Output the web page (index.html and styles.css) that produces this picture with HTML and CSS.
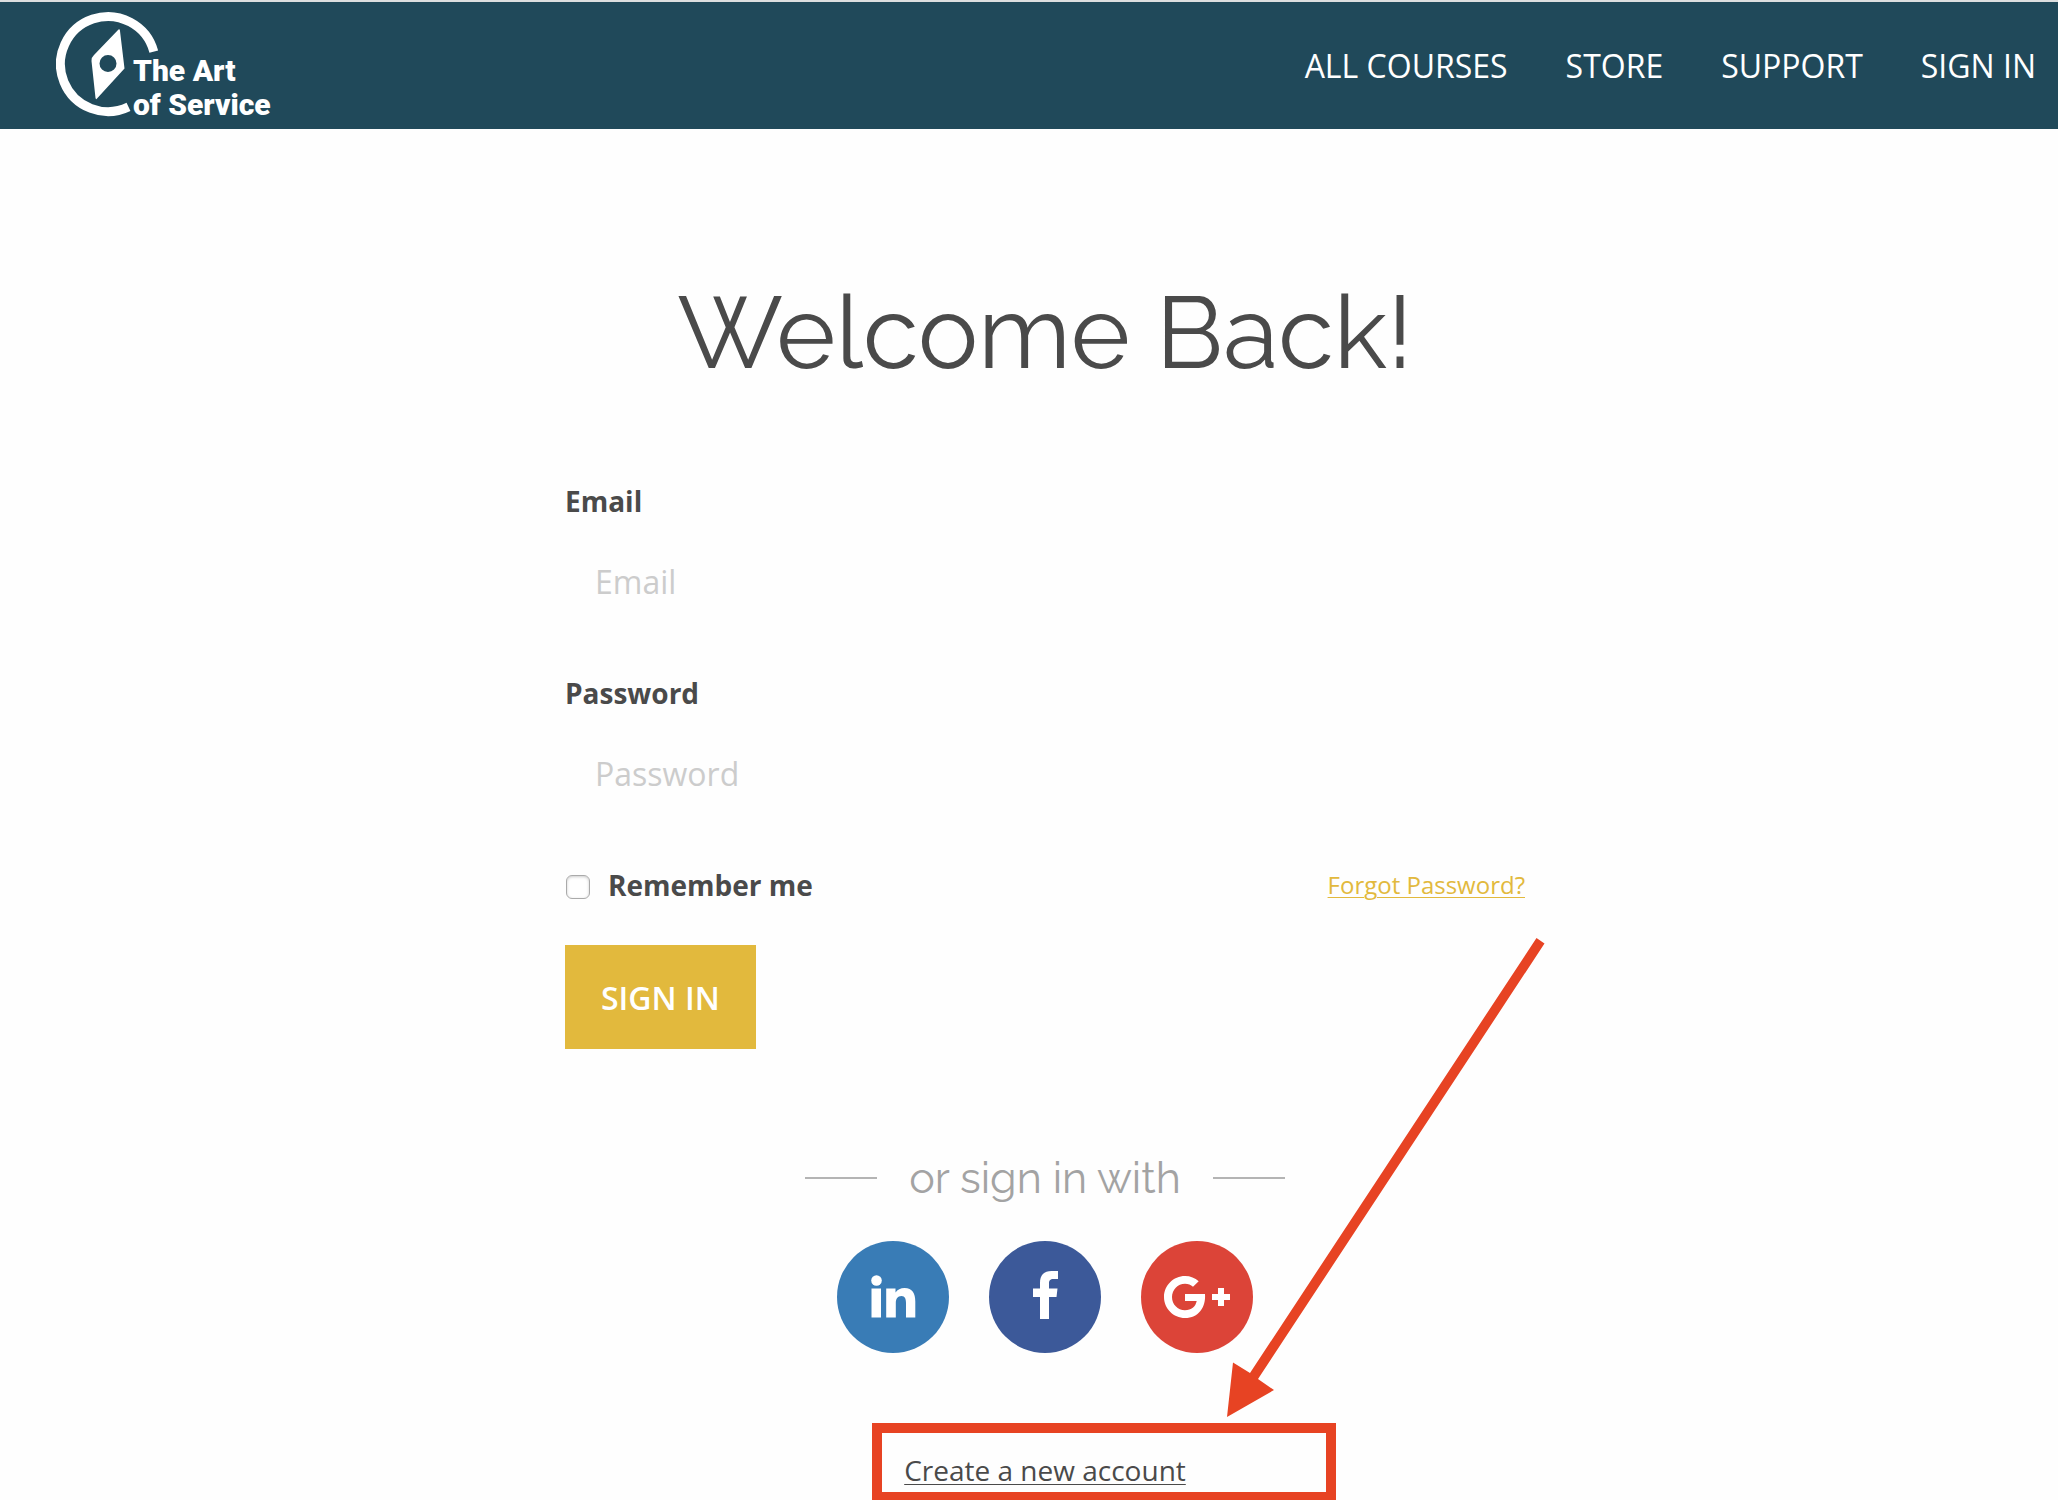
FILE: index.html
```html
<!DOCTYPE html>
<html lang="en">
<head>
  <meta charset="UTF-8" />
  <meta name="viewport" content="width=device-width, initial-scale=1" />
  <title>Sign In | The Art of Service</title>

  <link rel="stylesheet" href="styles.css">
</head>
<body>
  <header class="header">
    <a class="logo" href="#" aria-label="The Art of Service">
      <svg width="230" height="120" viewBox="0 -4 230 120">
        <path class="logo-ring" d="M97.8 41.6 A47.5 47.5 0 1 0 72.5 96.9" />
        <path class="logo-needle" fill-rule="evenodd" d="M62.5 19.5 Q64 18.500 64 21 L68.500 58.500 L41 88.500 Q40 90 39.500 88 L35.500 51 Q35.500 47 38 45 Z M60.500 53.500 a8.500 8.500 0 1 0 -17 0 a8.500 8.500 0 1 0 17 0 Z" />
        <text x="77" y="71">The Art</text>
        <text x="77" y="105">of Service</text>
      </svg>
    </a>
    <nav class="nav">
      <a href="#">ALL COURSES</a>
      <a href="#">STORE</a>
      <a href="#">SUPPORT</a>
      <a href="#">SIGN IN</a>
    </nav>
  </header>

  <main class="page">
    <div class="login">
      <h1>Welcome Back!</h1>

      <form class="login-form">
        <label for="email">Email</label>
        <input type="email" id="email" placeholder="Email" />

        <label for="password">Password</label>
        <input type="password" id="password" placeholder="Password" />

        <div class="options">
          <input type="checkbox" id="remember" />
          <label for="remember">Remember me</label>
          <a class="forgot" href="#">Forgot Password?</a>
        </div>

        <button type="submit" class="btn-signin">SIGN IN</button>
      </form>

      <div class="divider">or sign in with</div>

      <div class="social">
        <a class="linkedin" href="#" aria-label="LinkedIn">
          <svg viewBox="0 0 112 112">
            <circle cx="39.500" cy="39.500" r="5.300" />
            <path d="M34.500 47.500 H44 V76.500 H34.500 Z M49.200 47.500 H58.500 V51.500 C60.500 48.500 63.500 47 67.500 47 C75.500 47 78.300 52.500 78.300 60.500 V76.500 H69 V62 C69 58 68 55 64.500 55 C60.500 55 58.800 58 58.800 62 V76.500 H49.200 Z" />
          </svg>
        </a>
        <a class="facebook" href="#" aria-label="Facebook">
          <svg viewBox="0 0 112 112">
            <path d="M51 78 V56 H44 V47.500 H51 V42 C51 34 55 30 62.500 30 H69 V38 H64.500 C61 38 60 39.500 60 42.500 V47.500 H68.500 L67.500 56 H60 V78 Z" />
          </svg>
        </a>
        <a class="google" href="#" aria-label="Google Plus">
          <svg viewBox="0 0 112 112">
            <path d="M44 35 C49.500 35 54 37 57.700 40.300 L52 45.700 C49.800 43.800 47.300 42.700 44 42.700 C36.700 42.700 31 48.700 31 56 C31 63.300 36.700 69.200 44 69.200 C50.500 69.200 54.500 65.800 55.700 60 H44 V53 H64 C65 66.500 57.500 77 44 77 C32.400 77 23 67.600 23 56 C23 44.400 32.400 35 44 35 Z" />
            <path d="M77 47 H83 V53 H89 V59 H83 V65 H77 V59 H71 V53 H77 Z" />
          </svg>
        </a>
      </div>

      <a class="create" href="#">Create a new account</a>

      <!-- pointer to the sign-up link -->
      <svg class="arrow" width="320" height="482" viewBox="0 0 320 482" aria-hidden="true">
        <path d="M311.500 2 L319.500 7.500 L33 443 L49 454 L2 481 L8 426.500 L25 437 Z" />
      </svg>
      <div class="highlight" aria-hidden="true"></div>
    </div>
  </main>
</body>
</html>
```
FILE: styles.css
```css
:root {
  --teal: #20495a;
  --gold: #e2b93d;
  --text: #4a4a4a;
  --red: #e74323;
}

* {
  box-sizing: border-box;
  margin: 0;
  padding: 0;
}

body {
  font-family: 'Open Sans', 'Noto Sans', sans-serif;
  font-size: 28px;
  line-height: 40px;
  color: var(--text);
  background: #fefefe;
}

.header {
  display: flex;
  align-items: center;
  justify-content: space-between;
  padding: 4px 22px 3px 56px;
  background: var(--teal);
  border-top: 2px solid #dcdedf;
}

.logo svg {
  display: block;
}

.logo-ring {
  fill: none;
  stroke: #fff;
  stroke-width: 9;
}

.logo-needle {
  fill: #fff;
}

.logo text {
  fill: #fff;
  font-family: Roboto, sans-serif;
  font-size: 30px;
  font-weight: 900;
}

.nav {
  display: flex;
  gap: 58px;
}

.nav a {
  color: #fff;
  font-size: 32px;
  text-decoration: none;
}

.page {
  padding: 144px 0 10px 32px;
}

.login {
  position: relative;
  max-width: 960px;
  margin: 0 auto;
}

h1 {
  font-family: Raleway, Lato, sans-serif;
  font-size: 101px;
  font-weight: 400;
  line-height: 120px;
  text-align: center;
  margin-bottom: 88px;
}

label {
  display: block;
  font-weight: 700;
}

input[type="email"],
input[type="password"] {
  display: block;
  width: 100%;
  height: 72px;
  margin: 24px 0 56px;
  padding: 0 30px;
  border: none;
  background: transparent;
  color: var(--text);
  font-family: inherit;
  font-size: 32px;
}

input::placeholder {
  color: #ccc;
}

.options {
  display: flex;
  align-items: center;
  margin-bottom: 40px;
}

.options input {
  appearance: none;
  width: 24px;
  height: 24px;
  margin: 4px 18px 0 1px;
  border: 1px solid #aaa;
  border-radius: 6px;
  background: #fff;
  box-shadow: inset 0 1px 3px #ccc;
}

.forgot {
  margin-left: auto;
  color: var(--gold);
  font-size: 24px;
}

.btn-signin {
  display: block;
  padding: 33px 36px 31px;
  border: none;
  background: var(--gold);
  color: #fff;
  font-family: inherit;
  font-size: 32px;
  font-weight: 600;
  line-height: 40px;
  cursor: pointer;
}

.divider {
  display: flex;
  align-items: center;
  justify-content: center;
  gap: 32px;
  margin: 105px 0 39px;
  color: #a3a3a3;
  font-family: Raleway, Lato, sans-serif;
  font-size: 43px;
  font-weight: 400;
  line-height: 48px;
}

.divider::before,
.divider::after {
  content: "";
  width: 72px;
  height: 2px;
  background: #b4b4b4;
}

.social {
  display: flex;
  justify-content: center;
  gap: 40px;
  margin-bottom: 97px;
}

.social a {
  width: 112px;
  height: 112px;
  border-radius: 50%;
}

.social svg {
  display: block;
  fill: #fff;
}

.linkedin {
  background: #397cb6;
}

.facebook {
  background: #3c5999;
}

.google {
  background: #dc4438;
}

.create {
  display: block;
  width: fit-content;
  margin: 0 auto;
  color: var(--text);
}

.forgot,
.create {
  text-decoration-thickness: 1px;
  text-underline-offset: 3px;
}

.arrow {
  position: absolute;
  top: 663px;
  left: 660px;
  fill: var(--red);
  pointer-events: none;
}

.highlight {
  position: absolute;
  top: 1150px;
  left: 307px;
  width: 464px;
  height: 77px;
  border: 10px solid var(--red);
  border-bottom-width: 8px;
  pointer-events: none;
}
```
